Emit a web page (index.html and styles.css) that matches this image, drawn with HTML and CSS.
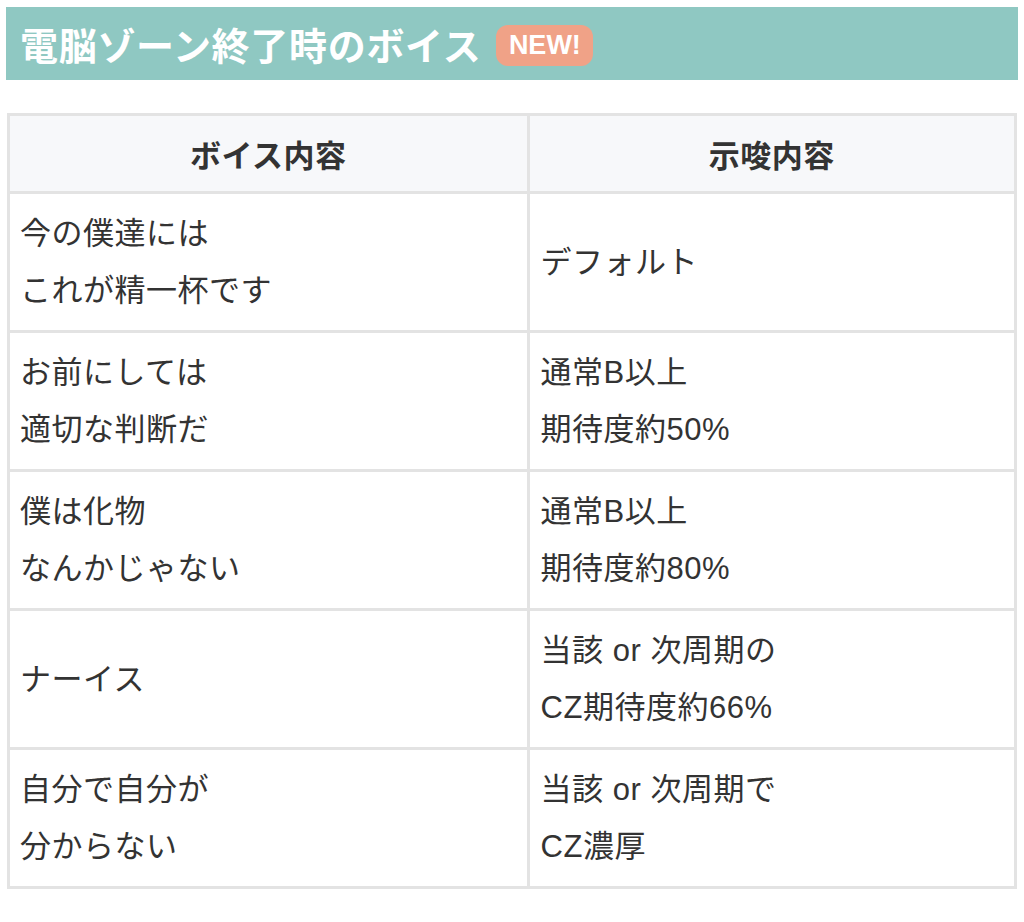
FILE: index.html
```html
<!DOCTYPE html>
<html lang="ja">
<head>
<meta charset="utf-8">
<title>電脳ゾーン終了時のボイス</title>
<link rel="stylesheet" href="styles.css">
</head>
<body>
<div class="page">
  <h2 class="heading">
    <span class="heading-text">電脳ゾーン終了時のボイス</span>
    <span class="badge">NEW!</span>
  </h2>
  <table class="voice-table">
    <colgroup>
      <col class="col-voice">
      <col class="col-hint">
    </colgroup>
    <thead>
      <tr><th>ボイス内容</th><th>示唆内容</th></tr>
    </thead>
    <tbody>
      <tr><td>今の僕達には<br>これが精一杯です</td><td>デフォルト</td></tr>
      <tr><td>お前にしては<br>適切な判断だ</td><td>通常B以上<br>期待度約50%</td></tr>
      <tr><td>僕は化物<br>なんかじゃない</td><td>通常B以上<br>期待度約80%</td></tr>
      <tr><td>ナーイス</td><td>当該 or 次周期の<br>CZ期待度約66%</td></tr>
      <tr><td>自分で自分が<br>分からない</td><td>当該 or 次周期で<br>CZ濃厚</td></tr>
    </tbody>
  </table>
</div>
</body>
</html>
```

FILE: styles.css
```css
html, body {
  margin: 0;
  padding: 0;
  background: #ffffff;
}

.page {
  padding: 7px 6px 0 6px;
  font-family: "Liberation Sans", "Noto Sans CJK JP", sans-serif;
  color: #333333;
}

.heading {
  margin: 0;
  height: 73px;
  background: #8fc8c2;
  display: flex;
  align-items: center;
  padding: 0 0 0 14px;
  box-sizing: border-box;
  gap: 15px;
}

.heading-text {
  font-family: "Noto Sans CJK JP", sans-serif;
  font-weight: 700;
  font-size: 38px;
  line-height: 1;
  color: #ffffff;
  letter-spacing: 0.7px;
}

.badge {
  display: flex;
  align-items: center;
  justify-content: center;
  width: 97px;
  height: 41px;
  border-radius: 12px;
  background: #f0a287;
  color: #ffffff;
  font-family: "Liberation Sans", sans-serif;
  font-weight: 700;
  font-size: 27px;
  line-height: 1;
  margin-top: 3px;
}

.voice-table {
  margin: 33px 1px 0 1px;
  width: calc(100% - 2px);
  border-collapse: collapse;
  table-layout: fixed;
  font-size: 31px;
  line-height: 57px;
  letter-spacing: 0.5px;
}

.col-voice {
  width: 51.6%;
}

.col-hint {
  width: 48.4%;
}

.voice-table th,
.voice-table td {
  border: 3px solid #e3e3e3;
  padding: 11px 11px 11px 10px;
  vertical-align: middle;
}

.voice-table th {
  background: #f7f8fa;
  font-family: "Noto Sans CJK JP", sans-serif;
  font-weight: 700;
  text-align: center;
  padding: 9px 12px;
  color: #333333;
}

.voice-table td {
  text-align: left;
  color: #333333;
}

.voice-table td + td {
  padding-left: 11px;
}
```
